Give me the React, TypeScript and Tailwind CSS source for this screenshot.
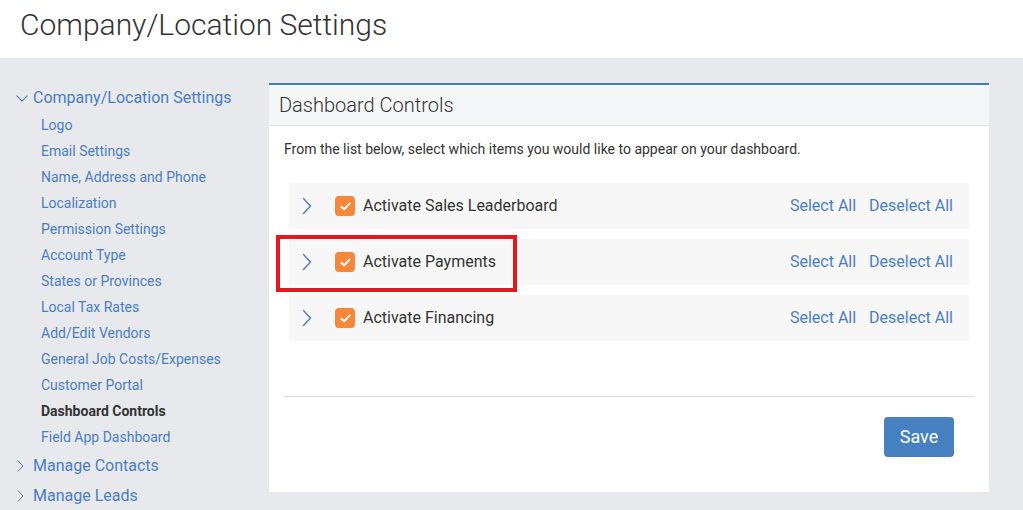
const subItems = [
  "Logo",
  "Email Settings",
  "Name, Address and Phone",
  "Localization",
  "Permission Settings",
  "Account Type",
  "States or Provinces",
  "Local Tax Rates",
  "Add/Edit Vendors",
  "General Job Costs/Expenses",
  "Customer Portal",
  "Dashboard Controls",
  "Field App Dashboard",
];

const controls = ["Activate Sales Leaderboard", "Activate Payments", "Activate Financing"];

function ChevronRight({ className }: { className?: string }) {
  return (
    <svg viewBox="0 0 10 18" className={className} fill="none">
      <path d="M1.5 1.5 L8.5 9 L1.5 16.5" stroke="currentColor" strokeWidth="1.4" strokeLinecap="round" strokeLinejoin="round" />
    </svg>
  );
}

function ChevronDown({ className }: { className?: string }) {
  return (
    <svg viewBox="0 0 14 8" className={className} fill="none">
      <path d="M1 1 L7 7 L13 1" stroke="currentColor" strokeWidth="1.3" strokeLinecap="round" strokeLinejoin="round" />
    </svg>
  );
}

function Checkbox() {
  return (
    <div className="flex h-[20px] w-[20px] items-center justify-center rounded-[4px] bg-[#f5883a]">
      <svg viewBox="0 0 12 10" className="h-[9px] w-[11px]" fill="none">
        <path d="M1.5 5.2 L4.5 8 L10.5 1.8" stroke="white" strokeWidth="2.2" strokeLinecap="round" strokeLinejoin="round" />
      </svg>
    </div>
  );
}

export default function App() {
  return (
    <div className="min-h-[510px] bg-[#e8e9ed] font-['Roboto',sans-serif] text-[#333]">
      <header className="flex h-[58px] items-center bg-white px-[20px] pb-[8px]">
        <h1 className="text-[30px] font-light leading-none text-[#333]">Company/Location Settings</h1>
      </header>

      <div className="flex items-start">
        <nav className="w-[269px] shrink-0 pt-[26px]">
          <div className="flex h-[28px] items-center pl-[16px] text-[16px] text-[#4a7ec4]">
            <ChevronDown className="mr-[5px] h-[7px] w-[12px]" />
            Company/Location Settings
          </div>
          <ul>
            {subItems.map((item) => (
              <li
                key={item}
                className={
                  item === "Dashboard Controls"
                    ? "h-[26px] pl-[41px] text-[14px] leading-[26px] font-bold text-[#333]"
                    : "h-[26px] pl-[41px] text-[14px] leading-[26px] text-[#4a7ec4]"
                }
              >
                {item}
              </li>
            ))}
          </ul>
          {["Manage Contacts", "Manage Leads"].map((item) => (
            <div key={item} className="flex h-[30px] items-center pl-[17px] pt-[1px] text-[16px] text-[#4a7ec4]">
              <ChevronRight className="mr-[9px] h-[14px] w-[7px]" />
              {item}
            </div>
          ))}
        </nav>

        <main className="mt-[25px] w-[720px] border-t-2 border-[#3f7bc0] bg-white pb-[35px]">
          <div className="flex h-[41px] items-center border-b border-[#e3e4e6] bg-[#f5f6f8] pl-[10px] text-[20px] font-light">
            Dashboard Controls
          </div>
          <p className="px-[15px] pt-[13px] text-[14px] leading-[20px] text-[#333]">
            From the list below, select which items you would like to appear on your dashboard.
          </p>
          <div className="mx-[20px] mt-[24px] flex flex-col gap-[10px]">
            {controls.map((label, i) => (
              <div key={label} className="relative flex h-[46px] items-center bg-[#f7f7f7] pl-[13px] pr-[16px]">
                <ChevronRight className="h-[18px] w-[10px] text-[#4a7ec4]" />
                <div className="ml-[23px]">
                  <Checkbox />
                </div>
                <span className="ml-[8px] text-[16px] text-[#333]">{label}</span>
                <div className="ml-auto flex gap-[13px] text-[16px] text-[#4a7ec4]">
                  <span>Select All</span>
                  <span>Deselect All</span>
                </div>
                {i === 1 && (
                  <div className="pointer-events-none absolute left-[-13px] top-[-4px] h-[57px] w-[241px] border-4 border-[#e3191f]" />
                )}
              </div>
            ))}
          </div>
          <hr className="mx-[15px] mt-[55px] border-t border-[#dcdcdc]" />
          <div className="mt-[20px] flex justify-end pr-[35px]">
            <button className="h-[40px] w-[70px] rounded-[4px] bg-[#4680c0] pb-[1px] text-[18px] text-white">Save</button>
          </div>
        </main>
      </div>
    </div>
  );
}
